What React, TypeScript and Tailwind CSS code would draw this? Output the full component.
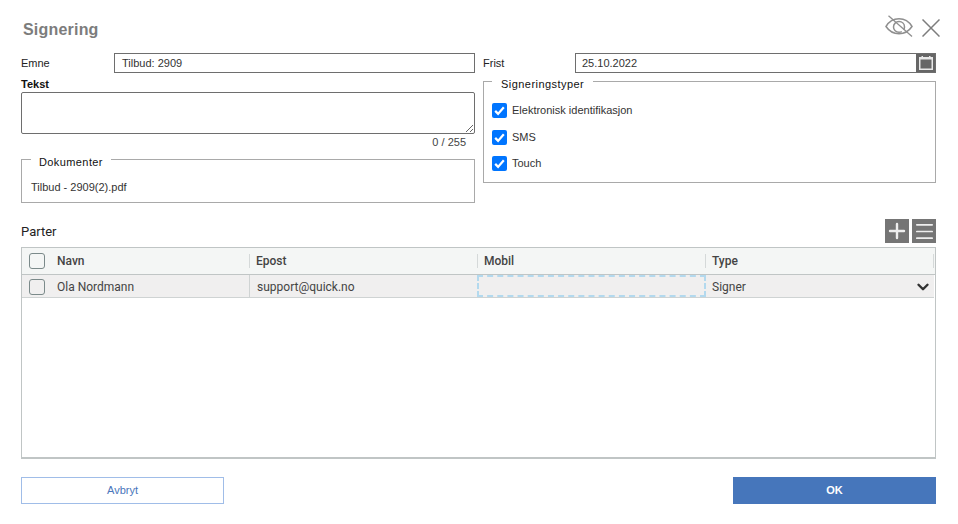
import { ChevronDown, Menu, Plus } from "lucide-react"

const SIGN_TYPES = ["Elektronisk identifikasjon", "SMS", "Touch"]

const Checkbox = ({ className }: { className: string }) => (
    <span className={`block shrink-0 w-[16px] h-[16px] rounded-[3px] border border-[#7b8a8a] ${className}`} />
)

const BlueCheck = () => (
    <span className="flex items-center justify-center w-[15px] h-[15px] rounded-[2px] bg-[#0075ff]">
        <svg viewBox="0 0 16 16" className="w-[15px] h-[15px]" fill="none">
            <path d="M3.4 8.4 6.5 11.6 12.6 4.6" stroke="white" strokeWidth="2.4" />
        </svg>
    </span>
)

const HeaderCell = ({ label, className }: { label: string; className: string }) => (
    <div className={`flex items-center h-full ${className}`}>
        <span className="w-px h-[14px] bg-[#d5d9d9]" />
        <span className="pl-[6px] font-medium">{label}</span>
    </div>
)

const HiddenEye = () => (
    <svg viewBox="0 0 28 22" className="w-[28px] h-[22px] text-[#8f8f8f]" fill="none" stroke="currentColor">
        <path d="M1 11.5C4 6.5 9 3.8 14 3.8s10 2.7 13 7.7c-3 4.500-8 7.200-13 7.200s-10-2.700-13-7.200Z" strokeWidth="1.500" />
        <path d="M8.500 12c0-3.200 2.500-5.400 5.500-5.400s5.500 2.200 5.500 5.400c0 1-.3 2-.8 2.700M16.800 16.600c-.9.400-1.800.600-2.800.600-3 0-5.500-2.200-5.500-5.200" strokeWidth="1.500" />
        <path d="M3.500 .8 27 21.500" strokeWidth="1.300" />
    </svg>
)

const CloseIcon = () => (
    <svg viewBox="0 0 18 18" className="w-[18px] h-[18px] text-[#7d7d7d]" fill="none" stroke="currentColor">
        <path d="M.5 .5 17.500 17.500M17.500 .5 .5 17.500" strokeWidth="1.500" />
    </svg>
)

const CalendarIcon = () => (
    <svg viewBox="0 0 14 14" className="w-[14px] h-[14px]">
        <path d="M0 1h2.500V0h1.500v1h6V0h1.500v1H14v13H0Z" fill="#e8e8e8" />
        <rect x="1.500" y="3.500" width="11" height="9" fill="#666" />
    </svg>
)

export default function App() {
    return (
        <div className="w-[958px] h-[524px] bg-white pl-[21px] pr-[22px] pt-[19px] font-['Liberation_Sans',Arial,sans-serif] text-[11px] text-[#333] overflow-hidden">
            <div className="flex items-start justify-between h-[34px]">
                <h1 className="pl-[2px] pt-[1px] text-[16px] tracking-[0.2px] leading-[20px] font-bold text-[#7c7c7c]">Signering</h1>
                <div className="flex items-start gap-[9px] -mt-[4px] -mr-[4px]">
                    <HiddenEye />
                    <span className="pt-[4px]"><CloseIcon /></span>
                </div>
            </div>

            <div className="grid grid-cols-[454px_453px] gap-x-[8px]">
                <div>
                    <div className="flex items-center h-[20px]">
                        <label className="w-[93px] text-[#222]">Emne</label>
                        <div className="flex-1 h-[20px] border border-[#6e6e6e] pl-[7px] leading-[18px]">Tilbud: 2909</div>
                    </div>
                    <div className="mt-[5px] h-[14px] leading-[13px] font-bold text-[#111]">Tekst</div>
                    <textarea className="block w-full h-[42px] border border-[#6e6e6e] rounded-[2px] outline-none" readOnly />
                    <div className="h-[16px] pr-[9px] text-right leading-[17px] text-[#444]">0 / 255</div>
                    <fieldset className="h-[53px] border border-[#a9a9a9] pl-[9px]">
                        <legend className="px-[8px] pt-[6px] leading-[13px] tracking-[0.4px] text-[#111]">Dokumenter</legend>
                        <div className="pt-[12px] leading-[13px]">Tilbud - 2909(2).pdf</div>
                    </fieldset>
                </div>

                <div>
                    <div className="flex items-center h-[20px]">
                        <label className="w-[92px] text-[#222]">Frist</label>
                        <div className="flex flex-1 h-[20px] border border-[#6e6e6e]">
                            <span className="flex-1 pl-[6px] leading-[18px]">25.10.2022</span>
                            <span className="flex items-center justify-center w-[19px] bg-[#666]">
                                <CalendarIcon />
                            </span>
                        </div>
                    </div>
                    <fieldset className="-mt-[1px] h-[111px] border border-[#a9a9a9] pl-[8px]">
                        <legend className="px-[9px] pt-[6px] leading-[13px] tracking-[0.45px] text-[#111]">Signeringstyper</legend>
                        <div className="pt-[12px] flex flex-col gap-[11.500px]">
                            {SIGN_TYPES.map(type => (
                                <div key={type} className="flex items-center gap-[5px] h-[15px]">
                                    <BlueCheck />
                                    <span>{type}</span>
                                </div>
                            ))}
                        </div>
                    </fieldset>
                </div>
            </div>

            <div className="flex items-center justify-between mt-[16px] h-[24px]">
                <span className="pt-[1px] text-[13px] text-[#222] font-['Roboto',sans-serif]">Parter</span>
                <div className="flex gap-[3px]">
                    <button className="flex items-center justify-center w-[24px] h-[24px] bg-[#757575]">
                        <Plus className="shrink-0 w-[24px] h-[24px] text-[#eee]" strokeWidth={2.4} />
                    </button>
                    <button className="flex items-center justify-center w-[24px] h-[24px] bg-[#757575]">
                        <Menu className="shrink-0 w-[23px] h-[23px] text-[#eee]" strokeWidth={1.800} />
                    </button>
                </div>
            </div>

            <div className="mt-[4px] h-[212px] border border-[#c0c5c5] border-b-2 font-['Roboto',sans-serif] text-[12px] text-[#444]">
                <div className="flex items-center h-[27px] bg-[#f4f6f5] border-b border-[#c0c5c5]">
                    <Checkbox className="ml-[7px] mr-[12px]" />
                    <span className="w-[192px] font-medium">Navn</span>
                    <HeaderCell label="Epost" className="w-[228px]" />
                    <HeaderCell label="Mobil" className="w-[228px]" />
                    <HeaderCell label="Type" className="w-[228px]" />
                    <span className="w-px h-[14px] bg-[#d5d9d9]" />
                </div>
                <div className="flex items-center h-[23px] mr-[1px] bg-[#f0efef] border-b border-[#cfd3d3]">
                    <Checkbox className="ml-[7px] mr-[12px] mt-[2px]" />
                    <span className="w-[192px] pt-[2px]">Ola Nordmann</span>
                    <span className="w-[228px] h-full pl-[7px] leading-[24px] border-l border-[#cfd3d3]">support@quick.no</span>
                    <span className="w-[229px] h-full border-2 border-dashed border-[#b3d9ee]" />
                    <span className="flex-1 flex items-center justify-between pl-[6px] pr-[2px] pt-[2px]">
                        Signer
                        <ChevronDown className="w-[18px] h-[18px] text-[#333]" strokeWidth={3.2} />
                    </span>
                </div>
            </div>

            <div className="flex justify-between mt-[18px]">
                <button className="w-[203px] h-[27px] border border-[#a0bde8] text-[#4a76bb] text-[11px]">Avbryt</button>
                <button className="w-[203px] h-[27px] bg-[#4676bb] text-white text-[11px] font-bold">OK</button>
            </div>
        </div>
    )
}
